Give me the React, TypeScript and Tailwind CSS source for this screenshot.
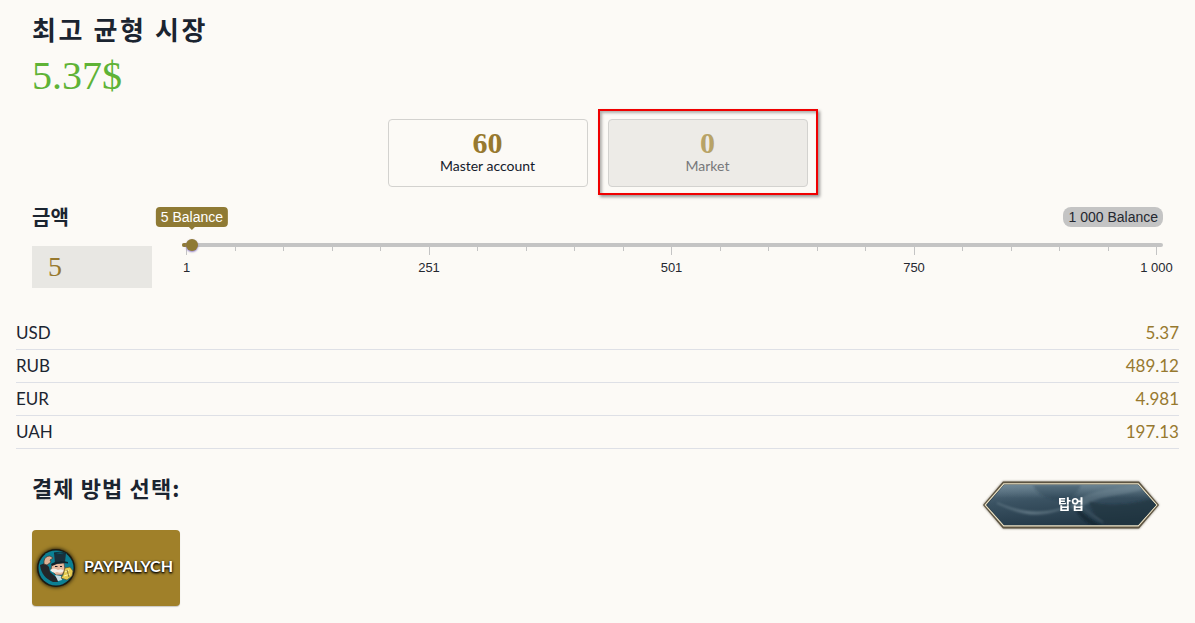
import { useState } from 'react';
import clsx from 'clsx';

interface Rate {
  code: string;
  perUnit: number;
}

const MIN = 1;
const MAX = 1000;

const rates: Rate[] = [
  { code: 'USD', perUnit: 1.074 },
  { code: 'RUB', perUnit: 97.824 },
  { code: 'EUR', perUnit: 0.9962 },
  { code: 'UAH', perUnit: 39.426 },
];

const accounts = [
  { id: 'master', label: 'Master account', balance: 60 },
  { id: 'market', label: 'Market', balance: 0 },
];

const tickLabels: Record<number, string> = { 0: '1', 5: '251', 10: '501', 15: '750', 20: '1 000' };

const convert = (amount: number, rate: Rate) => String(Number((amount * rate.perUnit).toFixed(3)));
const formatAmount = (amount: number) => amount.toLocaleString('en-US').replace(',', ' ');

function AccountCards() {
  const [selected, setSelected] = useState('market');

  return (
    <div className="flex flex-wrap justify-center gap-5">
      {accounts.map((account) => {
        const active = account.id === selected;
        return (
          <div key={account.id} className="relative">
            <button
              type="button"
              aria-pressed={active}
              onClick={() => setSelected(account.id)}
              className={clsx(
                'flex h-[68px] w-[200px] flex-col items-center rounded border border-[#d3d2cf] pt-2',
                active && 'bg-[#edebe7]',
              )}
            >
              <span
                className={clsx(
                  'font-["Liberation_Serif",serif] text-[30px] leading-[30px] font-bold',
                  active ? 'text-[#b8a367]' : 'text-[#97792f]',
                )}
              >
                {account.balance}
              </span>
              <span className={clsx('text-sm leading-4', active ? 'text-[#77787b]' : 'text-[#14192b]')}>
                {account.label}
              </span>
            </button>
            {active && (
              <div className="pointer-events-none absolute -inset-x-[10px] -top-[10px] -bottom-2 border-2 border-[#f00000] shadow-[2px_2px_3px_rgba(0,0,0,0.4),inset_2px_2px_3px_rgba(0,0,0,0.3)]" />
            )}
          </div>
        );
      })}
    </div>
  );
}

function AmountSlider({ value, onChange }: { value: number; onChange: (value: number) => void }) {
  const ratio = (value - MIN) / (MAX - MIN);
  const thumb = `calc(6px + (100% - 12px) * ${ratio})`;

  return (
    <div className='min-w-0 flex-1 font-["Liberation_Sans",sans-serif]'>
      <div className="relative flex h-5 justify-end text-sm leading-5">
        <output
          htmlFor="amount-range"
          className="absolute -translate-x-1/2 rounded bg-[#8f7a34] px-[5px] whitespace-nowrap text-white"
          style={{ left: thumb }}
        >
          {formatAmount(value)} Balance
          <span className="absolute top-full left-1/2 -translate-x-1/2 border-x-[3px] border-t-[3px] border-x-transparent border-t-[#8f7a34]" />
        </output>
        <span className="rounded-lg bg-[#c4c4c4] px-[5px] text-[#252830]">1 000 Balance</span>
      </div>
      <div className="relative mt-3 h-3">
        <div className="absolute inset-x-0 top-1 h-1 rounded-full bg-[#c4c4c4]" />
        <div className="absolute top-1 left-0 h-1 rounded-l-full bg-[#8f7a34]" style={{ width: thumb }} />
        <input
          id="amount-range"
          type="range"
          aria-label="Balance"
          min={MIN}
          max={MAX}
          value={value}
          onChange={(e) => onChange(Number(e.target.value))}
          className="relative block h-3 w-full cursor-pointer appearance-none bg-transparent [&::-webkit-slider-thumb]:h-3 [&::-webkit-slider-thumb]:w-3 [&::-webkit-slider-thumb]:appearance-none [&::-webkit-slider-thumb]:rounded-full [&::-webkit-slider-thumb]:bg-[#8f7a34] [&::-webkit-slider-thumb]:shadow-[0_1px_2px_#8e7dc4]"
        />
      </div>
      <div className="-mt-1 flex h-8 justify-between pr-[6px] pl-1">
        {Array.from({ length: 21 }, (_, i) => (
          <div key={i} className="flex w-px flex-col items-center">
            <div className={clsx('w-px bg-[#c4c4c4]', i % 5 === 0 ? 'h-2' : 'h-1')} />
            {tickLabels[i] && (
              <span className="mt-[5px] text-[13px] leading-4 whitespace-nowrap text-[#252830]">{tickLabels[i]}</span>
            )}
          </div>
        ))}
      </div>
    </div>
  );
}

function TopUpButton() {
  return (
    <button type="button" className="relative grid h-12 w-44 place-items-center drop-shadow-[0_0_1px_rgba(70,60,40,0.7)]">
      <svg viewBox="0 0 176 48" className="absolute inset-0 h-full w-full" aria-hidden="true">
        <defs>
          <linearGradient id="steel" x1="0" y1="0" x2="0.3" y2="1">
            <stop offset="0" stopColor="#60788a" />
            <stop offset="0.45" stopColor="#3a5262" />
            <stop offset="1" stopColor="#223746" />
          </linearGradient>
          <linearGradient id="top" x1="0" y1="0" x2="0" y2="1">
            <stop offset="0" stopColor="#8098a4" stopOpacity="0.65" />
            <stop offset="1" stopColor="#8098a4" stopOpacity="0" />
          </linearGradient>
          <linearGradient id="sheen" x1="0" y1="0" x2="1" y2="0">
            <stop offset="0" stopColor="#8ea3af" stopOpacity="0" />
            <stop offset="0.5" stopColor="#8ea3af" stopOpacity="0.5" />
            <stop offset="1" stopColor="#8ea3af" stopOpacity="0" />
          </linearGradient>
          <filter id="soft" x="-10%" y="-10%" width="120%" height="120%">
            <feGaussianBlur stdDeviation="0.8" />
          </filter>
          <clipPath id="plate">
            <path d="M21 4H155L173 24L155 44H21L4 24Z" />
          </clipPath>
        </defs>
        <path d="M20 0.500H156L176 24L156 47.500H20L0 24Z" fill="#5d5442" />
        <path d="M20.500 2.300H155.500L174.500 24L155.500 45.500H20.500L1.500 24Z" fill="#efe6c8" />
        <path d="M21 3.500H155L173 24L155 44.300H21L3 24Z" fill="#263948" />
        <g clipPath="url(#plate)">
          <rect width="176" height="48" fill="url(#steel)" />
          <rect y="3" width="176" height="14" fill="url(#top)" />
          <g filter="url(#soft)">
            <path d="M14 22C36 33 60 34 82 27C66 37 34 36 14 22Z" fill="url(#sheen)" />
            <path d="M50 4C54 14 66 20 84 20C92 16 96 8 98 4Z" fill="#243b4a" opacity="0.3" />
            <path d="M86 26C104 8 128 8 158 4V9C134 16 110 14 94 30Z" fill="#8297a3" opacity="0.35" />
            <path d="M92 24C100 32 108 40 122 46H112C100 40 92 32 92 24Z" fill="#122431" opacity="0.7" />
            <path d="M106 20C124 26 150 24 174 16V46H128C114 40 108 30 106 20Z" fill="#1c303d" opacity="0.6" />
            <path d="M14 22C34 31 56 34 78 28" stroke="#8ea3ae" strokeOpacity="0.6" fill="none" />
            <path d="M94 22C102 26 106 34 120 41" stroke="#8298a4" strokeOpacity="0.4" fill="none" />
          </g>
        </g>
      </svg>
      <span className='relative pb-1 font-["Noto_Sans_CJK_KR",sans-serif] text-sm leading-4 font-bold text-white'>탑업</span>
    </button>
  );
}

function TycoonLogo() {
  return (
    <svg viewBox="0 0 40 40" className="h-10 w-10 shrink-0 drop-shadow-[0_0_2px_#000]" aria-hidden="true">
      <circle cx="20" cy="20" r="19" fill="#1c1a12" />
      <circle cx="20" cy="20" r="17.500" fill="#0c8094" />
      {/* coat */}
      <path d="M4 17L9 15L13 19L14 24L21 30L22 34L17 34C10 31 5 26 4 17Z" fill="#23262a" />
      {/* hand on the brim */}
      <path d="M8 13Q9 8 14 8L17 10L14 12L15 14L11 17L8 16Z" fill="#dfb196" stroke="#493229" strokeWidth="0.700" />
      {/* face */}
      <path d="M16 16L28 15L29 22L26 27L20 27L15 22Z" fill="#e6b89d" stroke="#493229" strokeWidth="0.600" />
      <path d="M14 22Q18 19 22 22Q26 20 28 23Q25 26 21 24Q17 26 14 22Z" fill="#f4efe8" />
      <path d="M19 18.500H21.500M24 18.500H26" stroke="#201e20" strokeWidth="1.200" />
      {/* top hat */}
      <path d="M18 5Q24 3 30 5L29 14Q23 12 19 15Z" fill="#1a2f3b" />
      <path d="M18 5Q24 3 30 5Q24 8 18 5Z" fill="#0e5768" stroke="#13222a" strokeWidth="0.600" />
      <path d="M15 16Q22 11 32 14L32 15.500Q23 14 16 18Z" fill="#13222a" />
      {/* collar and money bag */}
      <path d="M19 27L25 28L26 32L22 33Z" fill="#c7dde4" />
      <path d="M29 20L34 19L37 23L36 28L31 32L25 30L27 27Z" fill="#e6cc50" stroke="#62502a" strokeWidth="0.700" />
      <path d="M29 24L33 22M28 28L34 26" stroke="#fff5ac" />
      <path d="M31 22L33 29" stroke="#6f5d2c" strokeWidth="0.800" />
    </svg>
  );
}

export default function App() {
  const [amount, setAmount] = useState(5);

  return (
    <main className='min-h-screen bg-[#fcfaf6] px-4 pt-[11px] pb-4 font-[Lato,"Noto_Sans_CJK_KR",sans-serif] text-[#1b2430]'>
      <div className="px-4">
        <h1 className='font-["Noto_Sans_CJK_KR",sans-serif] text-[26px] leading-9 font-bold tracking-widest'>최고 균형 시장</h1>
        <p className='font-["Liberation_Serif",serif] text-[40px] leading-[58px] text-[#5fb336]'>{convert(amount, rates[0])}$</p>
      </div>

      <div className="mt-[14px]">
        <AccountCards />
      </div>

      <div className="mt-5 flex gap-[30px] px-4">
        <div className="w-[120px] shrink-0">
          <label htmlFor="amount" className='block font-["Noto_Sans_CJK_KR",sans-serif] text-xl leading-5 font-bold'>
            금액
          </label>
          <input
            id="amount"
            type="text"
            inputMode="numeric"
            value={amount}
            onChange={(e) => setAmount(Math.min(MAX, Math.max(MIN, Number(e.target.value) || MIN)))}
            className='mt-[19px] block h-[42px] w-full bg-[#e8e7e3] px-4 font-["Liberation_Serif",serif] text-[28px] text-[#97792f] outline-none'
          />
        </div>
        <AmountSlider value={amount} onChange={setAmount} />
      </div>

      <table className="mt-[29px] w-full text-[17px] leading-8">
        <tbody>
          {rates.map((rate) => (
            <tr key={rate.code} className="border-b border-[#dee0e6]">
              <th scope="row" className="p-0 text-left font-normal">
                {rate.code}
              </th>
              <td className="p-0 text-right text-[#97792f]">{convert(amount, rate)}</td>
            </tr>
          ))}
        </tbody>
      </table>

      <div className="mt-5 flex items-start justify-between px-4">
        <div>
          <h2 className='font-["Noto_Sans_CJK_KR",sans-serif] text-[22px] leading-9 font-bold tracking-wider'>
            결제 방법 선택:
          </h2>
          <button
            type="button"
            className="mt-[25px] flex h-[76px] w-[148px] items-center gap-2 rounded bg-[#a08029] px-1 shadow-[0_1px_1px_rgba(0,0,0,0.2)]"
          >
            <TycoonLogo />
            <span className="pb-1 text-base font-bold text-white [text-shadow:0_1px_3px_#000,0_1px_2px_#000]">
              PAYPALYCH
            </span>
          </button>
        </div>
        <div className="mt-3 mr-1">
          <TopUpButton />
        </div>
      </div>
    </main>
  );
}
